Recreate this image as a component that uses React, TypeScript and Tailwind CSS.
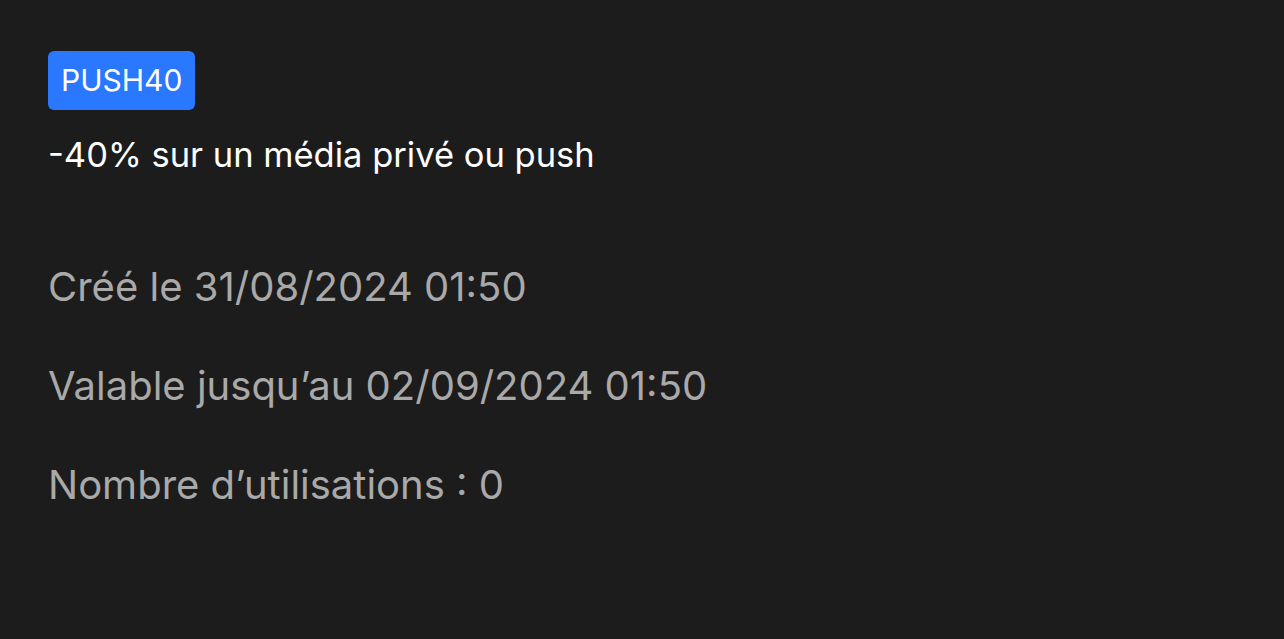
import React from 'react';

const details = [
  'Créé le 31/08/2024 01:50',
  'Valable jusqu’au 02/09/2024 01:50',
  'Nombre d’utilisations : 0',
];

const App: React.FC = () => {
  return (
    <div
      className="min-h-[639px] w-full bg-[#1c1c1c] px-12 pt-[51px]"
      style={{ fontFamily: 'Inter, "Noto Sans", sans-serif' }}
    >
      {/* Code badge */}
      <div className="inline-flex h-[59px] items-center rounded-md bg-[#2a78ff] px-[13px] text-[30px] text-white">
        PUSH40
      </div>

      <p className="mt-[25px] text-[34.5px] leading-[40px] text-white">
        -40% sur un média privé ou push
      </p>

      {/* Details */}
      <div className="mt-[89px] flex flex-col gap-[54px]">
        {details.map((line) => (
          <p key={line} className="text-[40px] leading-[45px] text-[#a9a9a9]">
            {line}
          </p>
        ))}
      </div>
    </div>
  );
};

export default App;
